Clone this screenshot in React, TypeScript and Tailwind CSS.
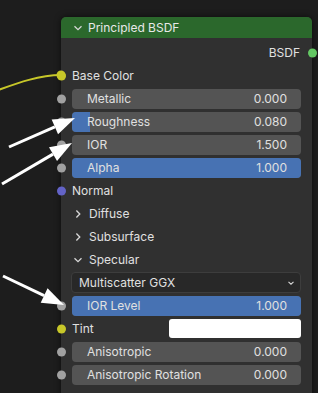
import React from "react";

type Row =
  | { kind: "field"; label: string; value: string; fill: number; socket: string }
  | { kind: "label"; label: string; socket?: string; align?: "left" | "right" }
  | { kind: "panel"; label: string; open: boolean }
  | { kind: "select"; label: string }
  | { kind: "color"; label: string; socket: string };

const GREY = "#a1a1a1";
const YELLOW = "#c7c729";

const rows: Row[] = [
  { kind: "label", label: "BSDF", socket: "#63c763", align: "right" },
  { kind: "label", label: "Base Color", socket: YELLOW },
  { kind: "field", label: "Metallic", value: "0.000", fill: 0, socket: GREY },
  { kind: "field", label: "Roughness", value: "0.080", fill: 0.08, socket: GREY },
  { kind: "field", label: "IOR", value: "1.500", fill: 0, socket: GREY },
  { kind: "field", label: "Alpha", value: "1.000", fill: 1, socket: GREY },
  { kind: "label", label: "Normal", socket: "#6363c7" },
  { kind: "panel", label: "Diffuse", open: false },
  { kind: "panel", label: "Subsurface", open: false },
  { kind: "panel", label: "Specular", open: true },
  { kind: "select", label: "Multiscatter GGX" },
  { kind: "field", label: "IOR Level", value: "1.000", fill: 1, socket: GREY },
  { kind: "color", label: "Tint", socket: YELLOW },
  { kind: "field", label: "Anisotropic", value: "0.000", fill: 0, socket: GREY },
  { kind: "field", label: "Anisotropic Rotation", value: "0.000", fill: 0, socket: GREY },
];

const Socket = ({ color, side = "left" }: { color: string; side?: "left" | "right" }) => (
  <span
    className={
      "absolute top-1/2 -translate-y-1/2 w-[9px] h-[9px] rounded-full " +
      (side === "left" ? "left-[-4.5px]" : "right-[-4.5px]")
    }
    style={{ backgroundColor: color }}
  />
);

const Chevron = ({ open }: { open: boolean }) => (
  <svg width="10" height="10" viewBox="0 0 10 10" className="shrink-0">
    {open ? (
      <path d="M1.5 3.2 L5 6.6 L8.5 3.2" fill="none" stroke="#d8d8d8" strokeWidth="1.3" />
    ) : (
      <path d="M3.4 1.5 L6.8 5 L3.4 8.5" fill="none" stroke="#d8d8d8" strokeWidth="1.3" />
    )}
  </svg>
);

const NodeRow = ({ row }: { row: Row }) => {
  if (row.kind === "label") {
    const right = row.align === "right";
    return (
      <div className={"relative h-[23px] flex items-center " + (right ? "justify-end pr-[12px]" : "pl-[11px]")}>
        {row.socket && <Socket color={row.socket} side={right ? "right" : "left"} />}
        <span>{row.label}</span>
      </div>
    );
  }
  if (row.kind === "panel") {
    return (
      <div className="relative h-[23px] flex items-center gap-[6px] pl-[12px]">
        <Chevron open={row.open} />
        <span>{row.label}</span>
      </div>
    );
  }
  if (row.kind === "select") {
    return (
      <div className="relative h-[23px] flex items-center pl-[10px] pr-[11px]">
        <div className="flex-1 h-[21px] rounded-[4px] bg-[#282828] border border-[#3d3d3d] flex items-center justify-between pl-[7px] pr-[5px]">
          <span>{row.label}</span>
          <svg width="8" height="8" viewBox="0 0 8 8">
            <path d="M1.5 2.8 L4 5.2 L6.5 2.8" fill="none" stroke="#d8d8d8" strokeWidth="1.1" />
          </svg>
        </div>
      </div>
    );
  }
  if (row.kind === "color") {
    return (
      <div className="relative h-[23px] flex items-center pl-[11px] pr-[11px]">
        <Socket color={row.socket} />
        <span className="w-[97px]">{row.label}</span>
        <div className="flex-1 h-[19px] rounded-[3px] bg-white" />
      </div>
    );
  }
  return (
    <div className="relative h-[23px] flex items-center pl-[11px] pr-[11px]">
      <Socket color={row.socket} />
      <div className="relative flex-1 h-[20px] rounded-[4px] bg-[#545454] overflow-hidden">
        <div className="absolute inset-y-0 left-0 bg-[#4772b3]" style={{ width: `${row.fill * 100}%` }} />
        <div className="relative h-full flex items-center justify-between pl-[15px] pr-[14px]">
          <span>{row.label}</span>
          <span>{row.value}</span>
        </div>
      </div>
    </div>
  );
};

export default function App() {
  return (
    <div
      className="relative w-[318px] h-[393px] overflow-hidden bg-[#1d1d1d] pl-[61px] pt-[17px] text-[12px] text-[#e0e0e0]"
      style={{ fontFamily: "Inter, 'DejaVu Sans', sans-serif" }}
    >
      <div className="w-[251px] rounded-t-[5px] bg-[#303030] shadow-[0_0_6px_rgba(0,0,0,0.6)] pb-[10px]">
        <div className="h-[21px] rounded-t-[5px] bg-[#2b682c] flex items-center gap-[5px] pl-[12px] text-[#e8e8e8]">
          <Chevron open />
          <span>Principled BSDF</span>
        </div>
        <div className="pt-[3px]">
          {rows.map((r) => (
            <NodeRow key={r.label} row={r} />
          ))}
        </div>
      </div>

      <svg className="absolute inset-0 pointer-events-none" width="318" height="393" viewBox="0 0 318 393">
        <path d="M-10 93 C 20 82, 40 75, 61 75" fill="none" stroke="#c7c729" strokeWidth="2" />
        <circle cx="61" cy="75" r="4.5" fill="#c7c729" />
        {[
          [9, 147, 75, 118],
          [2, 184, 72, 143],
          [3, 276, 64, 305],
        ].map(([x1, y1, x2, y2], i) => {
          const a = Math.atan2(y2 - y1, x2 - x1);
          const len = 22;
          const w = 8;
          const bx = x2 - len * Math.cos(a);
          const by = y2 - len * Math.sin(a);
          const px = -Math.sin(a) * w;
          const py = Math.cos(a) * w;
          return (
            <g key={i}>
              <line x1={x1} y1={y1} x2={bx} y2={by} stroke="white" strokeWidth="3" />
              <polygon points={`${x2},${y2} ${bx + px},${by + py} ${bx - px},${by - py}`} fill="white" />
            </g>
          );
        })}
      </svg>
    </div>
  );
}
